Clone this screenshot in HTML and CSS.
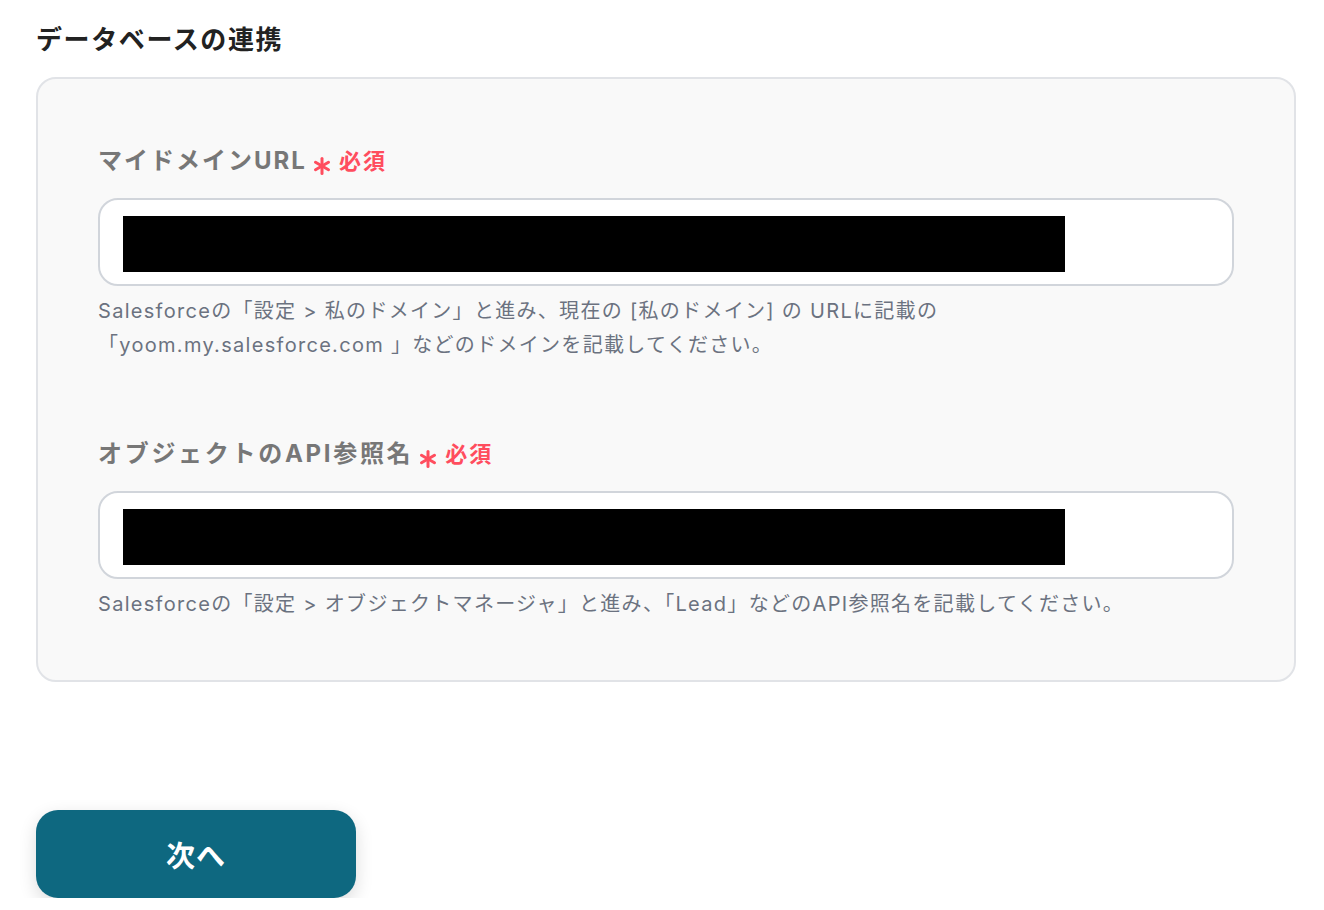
FILE: index.html
```html
<!DOCTYPE html>
<html lang="ja">
<head>
<meta charset="utf-8">
<link rel="stylesheet" href="styles.css">
</head>
<body>
<div class="page">
  <h2 class="title">データベースの連携</h2>
  <div class="card">
    <div class="field">
      <div class="label">マイドメインURL<span class="req"><svg class="ast" viewBox="0 0 18 18" width="18" height="18"><g stroke="#ff4d5e" stroke-width="3" stroke-linecap="round"><line x1="9" y1="1.5" x2="9" y2="16.5"/><line x1="2.5" y1="5.2" x2="15.5" y2="12.8"/><line x1="2.5" y1="12.8" x2="15.5" y2="5.2"/></g></svg>必須</span></div>
      <div class="input"><div class="mask"></div></div>
      <p class="help">Salesforceの「設定 &gt; 私のドメイン」と進み、現在の [私のドメイン] の URLに記載の<br>「yoom.my.salesforce.com 」などのドメインを記載してください。</p>
    </div>
    <div class="field second">
      <div class="label label-wide">オブジェクトのAPI参照名<span class="req"><svg class="ast" viewBox="0 0 18 18" width="18" height="18"><g stroke="#ff4d5e" stroke-width="3" stroke-linecap="round"><line x1="9" y1="1.5" x2="9" y2="16.5"/><line x1="2.5" y1="5.2" x2="15.5" y2="12.8"/><line x1="2.5" y1="12.8" x2="15.5" y2="5.2"/></g></svg>必須</span></div>
      <div class="input"><div class="mask"></div></div>
      <p class="help">Salesforceの「設定 &gt; オブジェクトマネージャ」と進み、「Lead」などのAPI参照名を記載してください。</p>
    </div>
  </div>
  <button class="next">次へ</button>
</div>
</body>
</html>
```
FILE: styles.css
```css
html, body {
  margin: 0;
  padding: 0;
  background: #ffffff;
}
body {
  font-family: "Inter", "Noto Sans CJK JP", sans-serif;
}
.page {
  padding: 22px 28px 0 36px;
}
.title {
  margin: 0;
  font-size: 26px;
  font-weight: 700;
  color: #222222;
  line-height: 36px;
  letter-spacing: 1.6px;
}
.card {
  margin-top: 19px;
  background: #f9f9f9;
  border: 2px solid #e1e3e7;
  border-radius: 20px;
  padding: 65px 60px 59px 60px;
}
.field.second {
  margin-top: 75px;
}
.label {
  font-size: 24px;
  font-weight: 700;
  color: #777777;
  line-height: 34px;
  letter-spacing: 2px;
  display: flex;
  align-items: center;
}
.label-wide {
  letter-spacing: 2.7px;
}
.req {
  display: inline-flex;
  align-items: center;
  margin-left: 6px;
  color: #ff4d5e;
  font-size: 22px;
  font-weight: 700;
  letter-spacing: 2px;
}
.ast {
  margin-right: 8px;
  position: relative;
  top: 5px;
}
.input {
  margin-top: 20px;
  background: #ffffff;
  border: 2px solid #d1d5db;
  border-radius: 20px;
  padding: 16px 0 0 23px;
  box-sizing: border-box;
  height: 88px;
}
.mask {
  width: 942px;
  height: 56px;
  background: #000000;
}
.help {
  margin: 8px 0 0;
  font-size: 20px;
  line-height: 34px;
  letter-spacing: 1.3px;
  color: #6b7280;
}
.next {
  margin-top: 128px;
  width: 320px;
  height: 88px;
  border: none;
  border-radius: 22px;
  background: #0e6880;
  color: #ffffff;
  font-family: "Inter", "Noto Sans CJK JP", sans-serif;
  font-size: 29px;
  font-weight: 700;
  letter-spacing: 1px;
  box-shadow: 0 6px 18px rgba(0, 0, 0, 0.14);
}
```
